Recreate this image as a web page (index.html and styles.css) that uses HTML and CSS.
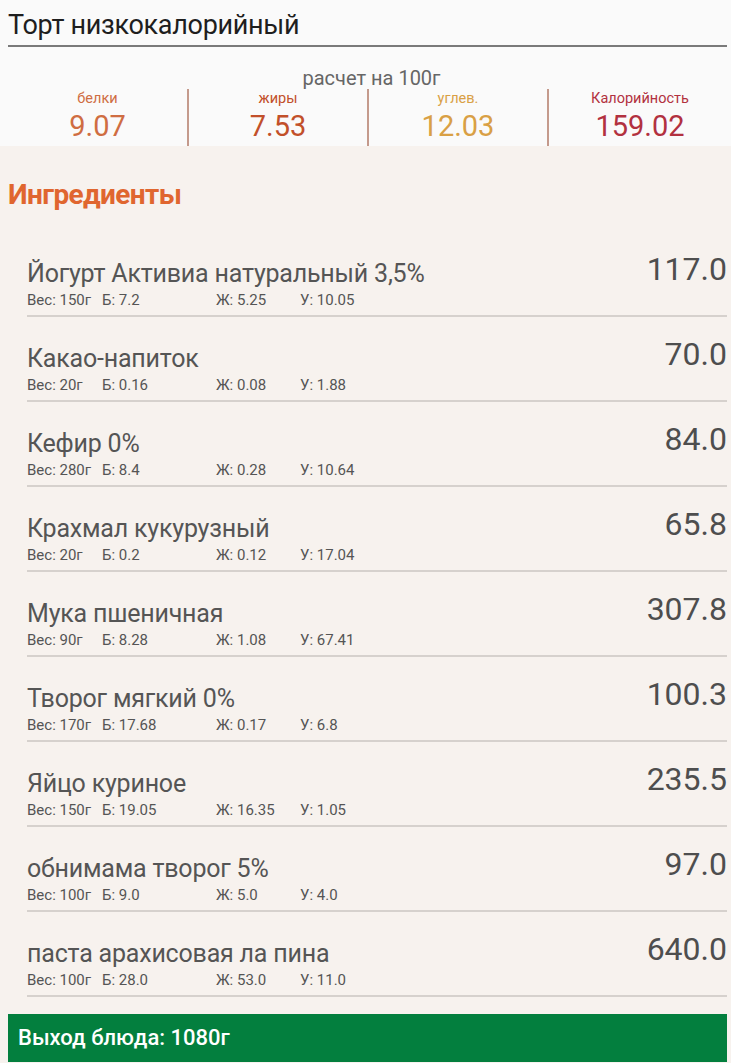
FILE: index.html
```html
<!DOCTYPE html>
<html lang="ru">
<head>
<meta charset="utf-8">
<link rel="stylesheet" href="styles.css">
</head>
<body>
<div class="page">
  <header class="top">
    <h1 class="title">Торт низкокалорийный</h1>
    <div class="per">расчет на 100г</div>
    <div class="macros">
      <div class="macro m-b"><div class="lbl">белки</div><div class="val">9.07</div></div>
      <div class="macro m-f"><div class="lbl">жиры</div><div class="val">7.53</div></div>
      <div class="macro m-c"><div class="lbl">углев.</div><div class="val">12.03</div></div>
      <div class="macro m-k"><div class="lbl">Калорийность</div><div class="val">159.02</div></div>
    </div>
  </header>
  <main class="body">
    <h2 class="section">Ингредиенты</h2>
    <ul class="list">
      <li class="item"><div class="info"><div class="name">Йогурт Активиа натуральный 3,5%</div><div class="sub"><span class="w">Вес: 150г</span><span class="b">Б: 7.2</span><span class="f">Ж: 5.25</span><span>У: 10.05</span></div></div><div class="kcal">117.0</div></li>
      <li class="item"><div class="info"><div class="name">Какао-напиток</div><div class="sub"><span class="w">Вес: 20г</span><span class="b">Б: 0.16</span><span class="f">Ж: 0.08</span><span>У: 1.88</span></div></div><div class="kcal">70.0</div></li>
      <li class="item"><div class="info"><div class="name">Кефир 0%</div><div class="sub"><span class="w">Вес: 280г</span><span class="b">Б: 8.4</span><span class="f">Ж: 0.28</span><span>У: 10.64</span></div></div><div class="kcal">84.0</div></li>
      <li class="item"><div class="info"><div class="name">Крахмал кукурузный</div><div class="sub"><span class="w">Вес: 20г</span><span class="b">Б: 0.2</span><span class="f">Ж: 0.12</span><span>У: 17.04</span></div></div><div class="kcal">65.8</div></li>
      <li class="item"><div class="info"><div class="name">Мука пшеничная</div><div class="sub"><span class="w">Вес: 90г</span><span class="b">Б: 8.28</span><span class="f">Ж: 1.08</span><span>У: 67.41</span></div></div><div class="kcal">307.8</div></li>
      <li class="item"><div class="info"><div class="name">Творог мягкий 0%</div><div class="sub"><span class="w">Вес: 170г</span><span class="b">Б: 17.68</span><span class="f">Ж: 0.17</span><span>У: 6.8</span></div></div><div class="kcal">100.3</div></li>
      <li class="item"><div class="info"><div class="name">Яйцо куриное</div><div class="sub"><span class="w">Вес: 150г</span><span class="b">Б: 19.05</span><span class="f">Ж: 16.35</span><span>У: 1.05</span></div></div><div class="kcal">235.5</div></li>
      <li class="item"><div class="info"><div class="name">обнимама творог 5%</div><div class="sub"><span class="w">Вес: 100г</span><span class="b">Б: 9.0</span><span class="f">Ж: 5.0</span><span>У: 4.0</span></div></div><div class="kcal">97.0</div></li>
      <li class="item"><div class="info"><div class="name">паста арахисовая ла пина</div><div class="sub"><span class="w">Вес: 100г</span><span class="b">Б: 28.0</span><span class="f">Ж: 53.0</span><span>У: 11.0</span></div></div><div class="kcal">640.0</div></li>
    </ul>
    <div class="total">Выход блюда: 1080г</div>
  </main>
</div>
</body>
</html>
```

FILE: styles.css
```css
* { box-sizing: border-box; }
html, body { margin: 0; padding: 0; }
body {
  width: 731px;
  height: 1063px;
  overflow: hidden;
  background: #f7f2ee;
  font-family: Roboto, "Noto Sans", sans-serif;
  color: #555;
}
.top {
  background: #fafafa;
  padding: 8px 4px 0 8px;
  height: 146px;
}
.title {
  margin: 0;
  font-weight: 400;
  font-size: 27px;
  line-height: 34px;
  color: #1e1e1e;
  letter-spacing: -0.3px;
  border-bottom: 2px solid #7a7a7a;
  padding-bottom: 3px;
}
.per {
  text-align: center;
  font-size: 20px;
  line-height: 22px;
  color: #666;
  margin-top: 20px;
  margin-right: -8px;
}
.macros {
  display: flex;
  margin-left: -8px;
  margin-right: -4px;
  height: 57px;
}
.macro {
  flex: 0 0 180px;
  text-align: center;
  border-left: 2px solid #c49a8c;
}
.macro:first-child { flex-basis: 187px; border-left: none; padding-left: 8px; }
.macro:last-child { flex: 1; }
.lbl { font-size: 14.5px; line-height: 18px; margin-top: 1px; }
.val { font-size: 29px; line-height: 34px; margin-top: 1px; }
.m-b { color: #cf6d42; }
.m-f { color: #c2502a; }
.m-c { color: #d9a045; }
.m-k { color: #b23140; }
.body { padding: 0 4px 0 8px; }
.section {
  margin: 0;
  padding-top: 30px;
  font-size: 28px;
  line-height: 38px;
  font-weight: 700;
  color: #e0662f;
  letter-spacing: -0.6px;
}
.list { list-style: none; margin: 0; padding: 0 0 0 19px; margin-top: 18px; }
.item {
  display: flex;
  justify-content: space-between;
  align-items: flex-start;
  padding-top: 27px;
  padding-bottom: 6px;
  border-bottom: 2px solid #d6d1cd;
  height: 85px;
}
.name { font-size: 25px; line-height: 30px; color: #555; letter-spacing: -0.2px; }
.sub { font-size: 15px; line-height: 18px; margin-top: 2px; color: #555; display: flex; }
.sub .w { width: 75px; }
.sub .b { width: 114px; }
.sub .f { width: 84px; }
.kcal { font-size: 32px; line-height: 36px; margin-top: -8px; color: #4e4e4e; }
.total {
  margin-top: 17px;
  background: #037f3e;
  color: #fff;
  height: 48px;
  font-size: 22px;
  line-height: 48px;
  padding-left: 10px;
  font-weight: 500;
}
```
